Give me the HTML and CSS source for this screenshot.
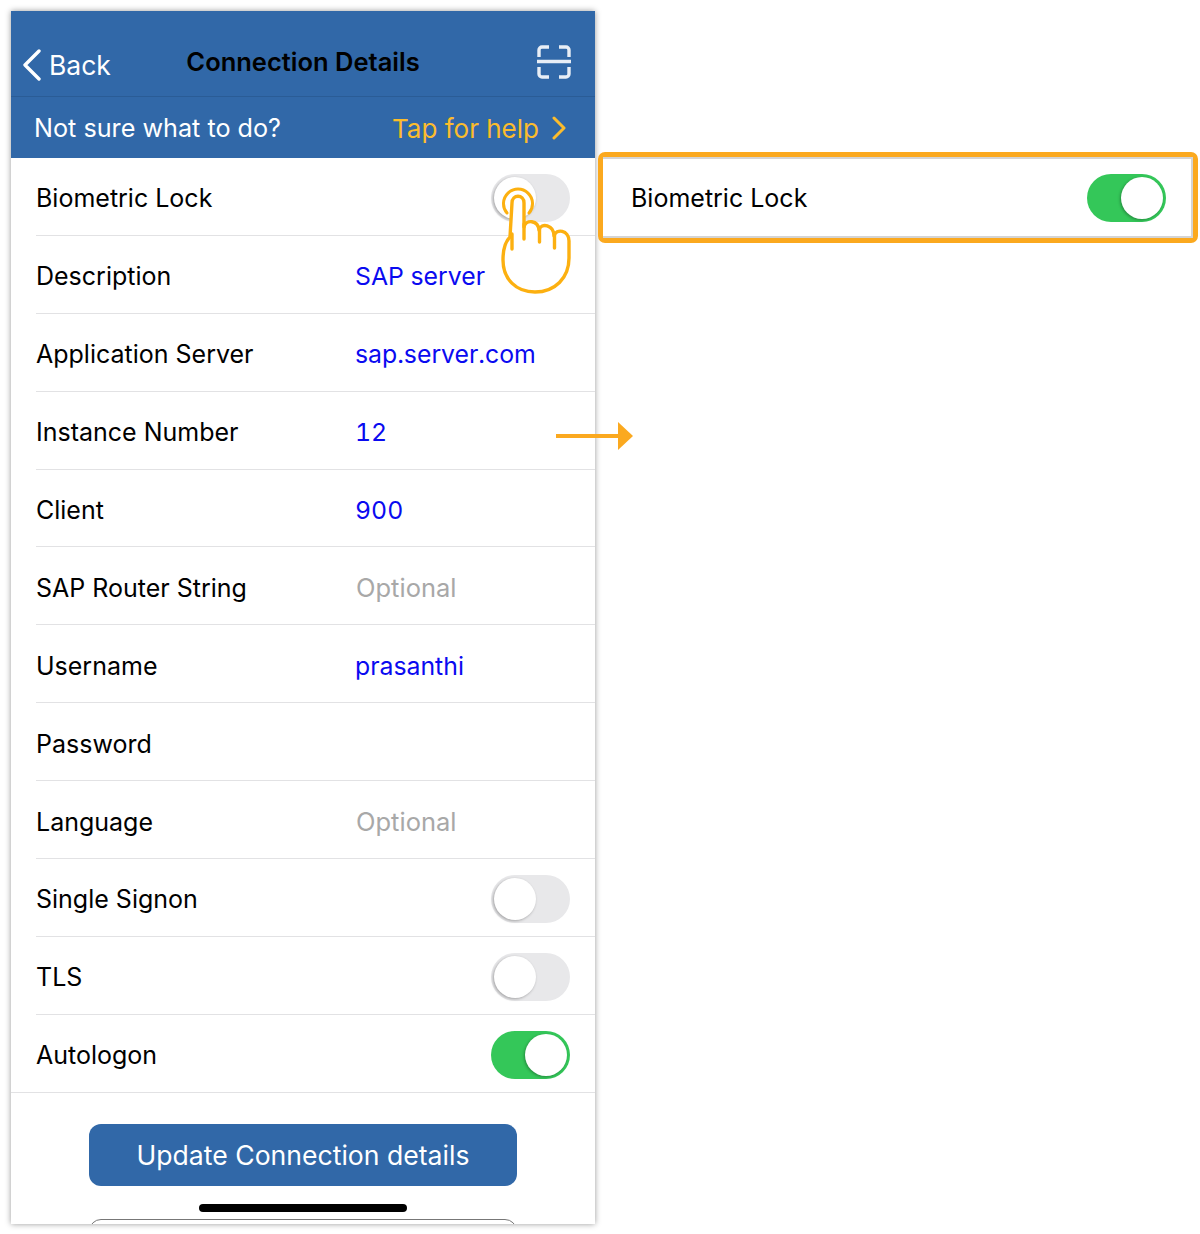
FILE: index.html
```html
<!DOCTYPE html>
<html lang="en">
<head>
    <meta charset="UTF-8">
    <title>Connection Details</title>
    <link rel="stylesheet" href="styles.css">
</head>
<body>
    <div class="page">
        <div class="phone">
            <div class="nav-bar">
                <div class="back">
                    <svg class="back-icon" width="20" height="32" viewBox="0 0 20 32"><path d="M17 2 L3 16 L17 30" /></svg>
                    <span>Back</span>
                </div>
                <h1 class="nav-title">Connection Details</h1>
                <svg class="scan-icon" width="34" height="34" viewBox="0 0 34 34">
                    <path d="M2 12 V5 a3 3 0 0 1 3 -3 H12 M22 2 H29 a3 3 0 0 1 3 3 V12 M32 22 V29 a3 3 0 0 1 -3 3 H22 M12 32 H5 a3 3 0 0 1 -3 -3 V22" />
                    <path d="M0 16.5 H34" />
                </svg>
            </div>
            <div class="help-bar">
                <span>Not sure what to do?</span>
                <div class="help-link">
                    <span>Tap for help</span>
                    <svg class="help-icon" width="15" height="24" viewBox="0 0 15 24"><path d="M2 2 L12 12 L2 22" /></svg>
                </div>
            </div>

            <div class="form">
                <div class="row">
                    <div class="label">Biometric Lock</div>
                    <div class="switch"><div class="knob"></div></div>
                </div>
                <div class="row">
                    <div class="label">Description</div>
                    <div class="value">SAP server</div>
                </div>
                <div class="row">
                    <div class="label">Application Server</div>
                    <div class="value">sap.server.com</div>
                </div>
                <div class="row">
                    <div class="label">Instance Number</div>
                    <div class="value">12</div>
                </div>
                <div class="row">
                    <div class="label">Client</div>
                    <div class="value">900</div>
                </div>
                <div class="row">
                    <div class="label">SAP Router String</div>
                    <div class="value placeholder">Optional</div>
                </div>
                <div class="row">
                    <div class="label">Username</div>
                    <div class="value">prasanthi</div>
                </div>
                <div class="row">
                    <div class="label">Password</div>
                </div>
                <div class="row">
                    <div class="label">Language</div>
                    <div class="value placeholder">Optional</div>
                </div>
                <div class="row">
                    <div class="label">Single Signon</div>
                    <div class="switch"><div class="knob"></div></div>
                </div>
                <div class="row">
                    <div class="label">TLS</div>
                    <div class="switch"><div class="knob"></div></div>
                </div>
                <div class="row last">
                    <div class="label">Autologon</div>
                    <div class="switch on"><div class="knob"></div></div>
                </div>
            </div>

            <div class="actions">
                <div class="update-button">Update Connection details</div>
            </div>
            <div class="home-bar"></div>
            <div class="next-button"></div>
        </div>

        <div class="callout">
            <div class="callout-inner">
                <div class="label">Biometric Lock</div>
                <div class="switch on"><div class="knob"></div></div>
            </div>
        </div>

        <!-- tap hand, drawn in page coordinates -->
        <svg class="hand" width="85" height="118" viewBox="495 180 85 118">
            <path class="hand-ring" d="M507 213 A14.5 14.5 0 1 1 529 213" />
            <path class="hand-body" d="M510 237 C505 242 503 250 503 260 C503 279 516 292 535 292 C555 292 569 278 569 258 V241 C569 230 556 228 554 236 C554 225 541 222 539 230 C538 220 526 219 524 227 V203 C524 194 512 194 512 203 Z" />
            <path class="hand-line" d="M512 234 V249 M524 224 V239 M539.5 228 V242 M554.5 234 V248" />
        </svg>

        <!-- arrow from the form to the callout -->
        <svg class="arrow" width="80" height="30" viewBox="0 0 80 30">
            <path class="arrow-line" d="M1 15 H66" />
            <path class="arrow-head" d="M63 1 L78 15 L63 29 Z" />
        </svg>
    </div>
</body>
</html>
```

FILE: styles.css
```css
* {
    margin: 0;
    padding: 0;
    box-sizing: border-box;
}

body {
    font-family: Inter, "Liberation Sans", sans-serif;
    background: #ffffff;
    color: #000000;
}

.page {
    position: relative;
    width: 1200px;
    height: 1234px;
    padding: 11px 0 0 11px;
    display: flex;
    align-items: flex-start;
    gap: 3px;
}

.phone {
    width: 584px;
    height: 1213px;
    background: #ffffff;
    box-shadow: 0 0 6px rgba(0,0,0,0.4);
    overflow: hidden;
}

.nav-bar {
    height: 86px;
    background: #3168a8;
    border-bottom: 1px solid #2a5c96;
    display: flex;
    align-items: flex-end;
    position: relative;
    color: #ffffff;
    font-size: 26.5px;
}

.back {
    display: flex;
    align-items: center;
    gap: 7px;
    padding: 0 0 15px 11px;
}

.back-icon path {
    fill: none;
    stroke: #ffffff;
    stroke-width: 3.4;
    stroke-linecap: round;
    stroke-linejoin: round;
}

.nav-title {
    position: absolute;
    left: 0;
    right: 0;
    top: 35px;
    text-align: center;
    font-size: 25.5px;
    font-weight: 600;
    color: #000000;
}

.scan-icon {
    position: absolute;
    top: 34px;
    right: 24px;
}

.scan-icon path {
    fill: none;
    stroke: #e8eef6;
    stroke-width: 3.4;
}

.help-bar {
    height: 61px;
    padding: 1px 28px 0 23px;
    background: #3168a8;
    display: flex;
    align-items: center;
    justify-content: space-between;
    color: #ffffff;
    font-size: 25.2px;
}

.help-link {
    display: flex;
    align-items: center;
    gap: 13px;
    color: #fbbc2d;
    font-size: 26px;
}

.help-icon path {
    fill: none;
    stroke: #fbbc2d;
    stroke-width: 3;
    stroke-linecap: round;
    stroke-linejoin: round;
}

.form {
    padding-left: 25px;
}

.row {
    height: 77.9px;
    padding-top: 4px;
    display: flex;
    align-items: center;
    border-bottom: 1px solid #e2e2e4;
    font-size: 25px;
}

.row.last {
    margin-left: -25px;
    padding-left: 25px;
}

.label {
    width: 319px;
    flex-shrink: 0;
}

.value {
    color: #0a0af0;
    font-size: 24.8px;
    font-variant-numeric: tabular-nums;
}

.placeholder {
    color: #a8a8a8;
    font-size: 25.5px;
    margin-left: 1px;
}

.switch {
    width: 79px;
    height: 48px;
    margin-left: auto;
    margin-right: 25px;
    border-radius: 24px;
    background: #e8e8ea;
    position: relative;
}

.knob {
    position: absolute;
    left: 3px;
    top: 3px;
    width: 42px;
    height: 42px;
    border-radius: 50%;
    background: #ffffff;
    box-shadow: -1px 1px 3px rgba(0,0,0,0.3);
}

.switch.on {
    background: #34c759;
}

.switch.on .knob {
    left: 34px;
}

.actions {
    padding: 31px 78px 0;
}

.update-button {
    height: 62px;
    background: #3168a8;
    border-radius: 12px;
    display: flex;
    align-items: center;
    justify-content: center;
    color: #ffffff;
    font-size: 26.6px;
}

.home-bar {
    width: 208px;
    height: 8px;
    margin: 18px auto 0;
    border-radius: 4px;
    background: #000000;
}

.next-button {
    width: 428px;
    height: 30px;
    margin: 7px auto 0;
    border: 1px solid #777777;
    border-radius: 12px;
}

.callout {
    width: 600px;
    height: 91px;
    margin-top: 141px;
    border: 5px solid #fba91f;
    border-radius: 7px;
    background: #ffffff;
}

.callout-inner {
    height: 100%;
    border: 2px solid #d4d4d4;
    border-left: 0;
    display: flex;
    align-items: center;
    padding-left: 28px;
    font-size: 25px;
}

.callout-inner .label {
    width: auto;
}

.hand {
    position: absolute;
    left: 495px;
    top: 180px;
}

.hand-ring {
    fill: none;
    stroke: #fcb010;
    stroke-width: 3;
    stroke-linecap: round;
}

.hand-body {
    fill: #ffffff;
    stroke: #fcb010;
    stroke-width: 3.4;
    stroke-linejoin: round;
}

.hand-line {
    fill: none;
    stroke: #fcb010;
    stroke-width: 3.4;
    stroke-linecap: round;
}

.arrow {
    position: absolute;
    left: 555px;
    top: 421px;
}

.arrow-line {
    fill: none;
    stroke: #fba91f;
    stroke-width: 4;
}

.arrow-head {
    fill: #fba91f;
}
```
